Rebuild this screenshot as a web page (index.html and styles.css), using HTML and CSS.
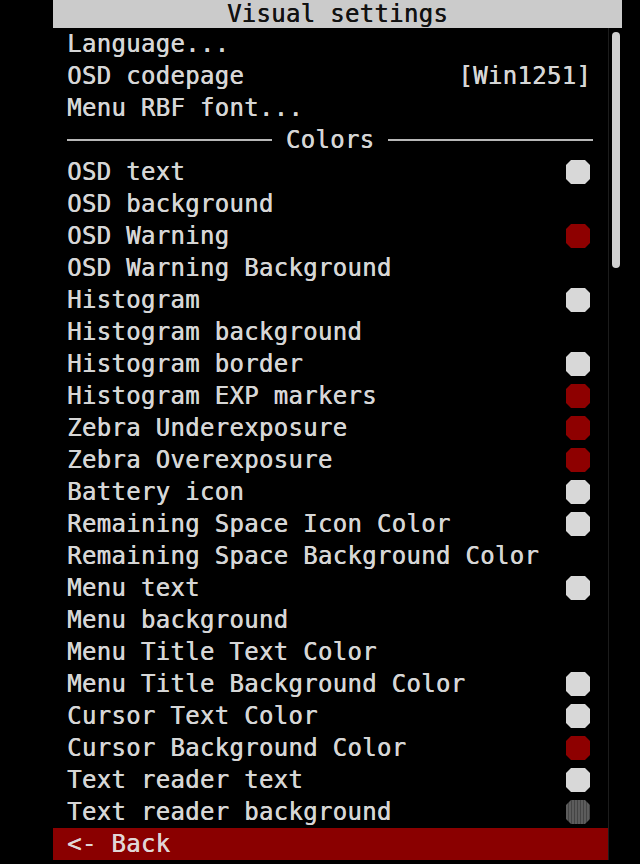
FILE: index.html
```html
<!DOCTYPE html>
<html lang="en">
<head>
<meta charset="UTF-8">
<title>Visual settings</title>
<link rel="stylesheet" href="styles.css">
</head>
<body>
<div class="menu">
    <div class="title">Visual settings</div>
    <div class="body">
        <ul class="items">
            <li class="row">Language...</li>
            <li class="row"><span>OSD codepage</span><span>[Win1251]</span></li>
            <li class="row">Menu RBF font...</li>
            <li class="row sep"><span class="rule"></span><span>Colors</span><span class="rule"></span></li>

            <li class="row"><span>OSD text</span><i class="swatch white"></i></li>
            <li class="row"><span>OSD background</span></li>
            <li class="row"><span>OSD Warning</span><i class="swatch red"></i></li>
            <li class="row"><span>OSD Warning Background</span></li>
            <li class="row"><span>Histogram</span><i class="swatch white"></i></li>
            <li class="row"><span>Histogram background</span></li>
            <li class="row"><span>Histogram border</span><i class="swatch white"></i></li>
            <li class="row"><span>Histogram EXP markers</span><i class="swatch red"></i></li>
            <li class="row"><span>Zebra Underexposure</span><i class="swatch red"></i></li>
            <li class="row"><span>Zebra Overexposure</span><i class="swatch red"></i></li>
            <li class="row"><span>Battery icon</span><i class="swatch white"></i></li>
            <li class="row"><span>Remaining Space Icon Color</span><i class="swatch white"></i></li>
            <li class="row"><span>Remaining Space Background Color</span></li>
            <li class="row"><span>Menu text</span><i class="swatch white"></i></li>
            <li class="row"><span>Menu background</span></li>
            <li class="row"><span>Menu Title Text Color</span></li>
            <li class="row"><span>Menu Title Background Color</span><i class="swatch white"></i></li>
            <li class="row"><span>Cursor Text Color</span><i class="swatch white"></i></li>
            <li class="row"><span>Cursor Background Color</span><i class="swatch red"></i></li>
            <li class="row"><span>Text reader text</span><i class="swatch white"></i></li>
            <li class="row"><span>Text reader background</span><i class="swatch grey"></i></li>

            <li class="row back">&lt;- Back</li>
        </ul>
        <div class="scroll"><div class="thumb"></div></div>
    </div>
</div>
</body>
</html>
```

FILE: styles.css
```css
/* CHDK style on-screen menu */
body {
    margin: 0;
    background: #000;
    font-family: "DejaVu Sans Mono", "Liberation Mono", monospace;
    font-size: 24px;
    letter-spacing: 0.3px;
    color: #d6d6d6;
    text-shadow: 0.5px 0 currentColor;
}

.menu {
    width: 569px;
    margin-left: 53px;
}

.title {
    height: 28px;
    line-height: 28px;
    text-align: center;
    background: #cbcbcb;
    color: #111;
}

.body {
    display: flex;
}

.items {
    list-style: none;
    margin: 0;
    padding: 0;
    width: 555px;
}

.row {
    height: 32px;
    display: flex;
    align-items: center;
    justify-content: space-between;
    padding: 0 17px 0 14px;
    white-space: nowrap;
}

.sep {
    gap: 14px;
    padding-right: 15px;
}

.rule {
    flex: 1;
    height: 2px;
    background: #b8b8b8;
}

.swatch {
    width: 24px;
    height: 24px;
    margin-right: 1px;
    clip-path: polygon(5px 0, 19px 0, 24px 5px, 24px 19px, 19px 24px, 5px 24px, 0 19px, 0 5px);
}

.white { background: #d8d8d8; }
.red { background: #8e0000; }
.grey {
    background: repeating-linear-gradient(90deg, #5c5c5c 0 2px, #444 2px 3px);
}

.back {
    background: #8a0000;
    color: #e0d6d6;
}

.scroll {
    width: 14px;
    border-left: 1px solid #1c1c1c;
    box-sizing: border-box;
}

.thumb {
    width: 8px;
    height: 236px;
    margin: 4px 0 0 3px;
    border-radius: 4px;
    background: #d0d0d0;
}
```
